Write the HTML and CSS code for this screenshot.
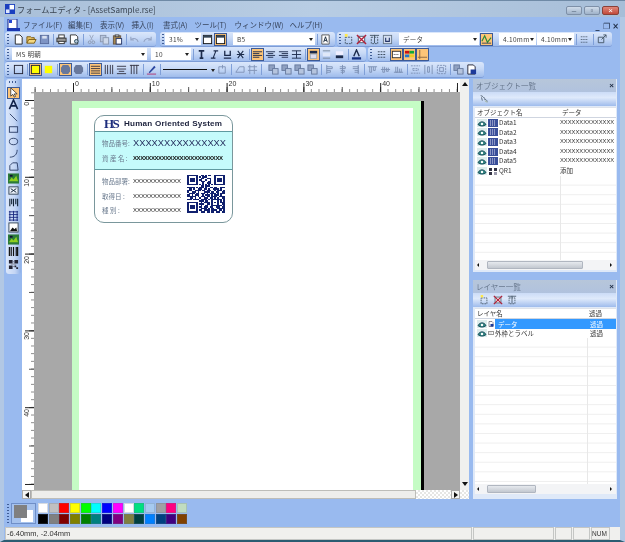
FILE: index.html
```html
<!DOCTYPE html>
<html lang="ja">
<head>
<meta charset="utf-8">
<title>フォームエディタ</title>
<link rel="stylesheet" href="styles.css">
</head>
<body>
<svg class="defs" width="0" height="0">
  <symbol id="new" viewBox="0 0 12 12"><path d="M2.500 1h5l2.500 2.500V11h-7.500z" fill="#fff" stroke="#222"/></symbol>
  <symbol id="open" viewBox="0 0 12 12"><path d="M1 10V3h4l1 1h3v2" fill="#e8c060" stroke="#7a5a10"/><path d="M1 10l2-4h8l-2 4z" fill="#f5d880" stroke="#7a5a10"/></symbol>
  <symbol id="save" viewBox="0 0 12 12"><rect x="1.500" y="1.500" width="9" height="9" fill="#7d93c4" stroke="#55699a"/><rect x="3.500" y="2" width="5" height="3" fill="#d8e0f0"/></symbol>
  <symbol id="print" viewBox="0 0 12 12"><rect x="3" y="1" width="6" height="3.500" fill="#fff" stroke="#333"/><rect x="1" y="4.500" width="10" height="4" fill="#999" stroke="#333"/><rect x="3" y="8" width="6" height="2.500" fill="#fff" stroke="#333"/></symbol>
  <symbol id="prev" viewBox="0 0 12 12"><path d="M1.500 1h6l2 2v8h-8z" fill="#fff" stroke="#333"/><circle cx="8" cy="8" r="2" fill="#bcd" stroke="#245"/></symbol>
  <symbol id="cut" viewBox="0 0 12 12"><path d="M4 1l3 6M8 1L5 7" stroke="#9aa7bf" fill="none"/><circle cx="4" cy="9" r="1.500" fill="none" stroke="#8a97af"/><circle cx="8" cy="9" r="1.500" fill="none" stroke="#8a97af"/></symbol>
  <symbol id="copy" viewBox="0 0 12 12"><rect x="1.500" y="1.500" width="6" height="7" fill="#b8c6de" stroke="#8a97af"/><rect x="4.500" y="4" width="6" height="7" fill="#cdd8ea" stroke="#8a97af"/></symbol>
  <symbol id="paste" viewBox="0 0 12 12"><rect x="1.500" y="2" width="8" height="9" fill="#a88850" stroke="#654"/><rect x="4.500" y="5" width="6" height="6" fill="#fff" stroke="#236"/><rect x="3.500" y="1" width="4" height="2" fill="#ddd" stroke="#444"/></symbol>
  <symbol id="undo" viewBox="0 0 12 12"><path d="M10 8.500C9 5 5 4 2.500 6M2 3v3.500h3.500" fill="none" stroke="#95a5c5" stroke-width="1.200"/></symbol>
  <symbol id="redo" viewBox="0 0 12 12"><path d="M2 8.500C3 5 7 4 9.500 6M10 3v3.500H6.500" fill="none" stroke="#95a5c5" stroke-width="1.200"/></symbol>
  <symbol id="page" viewBox="0 0 12 12"><rect x="1.500" y="1.500" width="9" height="9" fill="#fff" stroke="#111"/><rect x="1.500" y="1.500" width="9" height="2.500" fill="#345"/></symbol>
  <symbol id="docA" viewBox="0 0 12 12"><path d="M2 1h8v10H2z" fill="#fff" stroke="#555"/><path d="M4 9l2-6 2 6M4.800 7h2.400" fill="none" stroke="#123"/></symbol>
  <symbol id="lnew" viewBox="0 0 12 12"><rect x="2.500" y="3.500" width="7" height="7" fill="none" stroke="#456" stroke-dasharray="2 1"/><path d="M2 0h3v3H2z" fill="#ffe94a"/></symbol>
  <symbol id="ldel" viewBox="0 0 12 12"><rect x="2.500" y="2.500" width="7" height="7" fill="#fff" stroke="#456"/><path d="M1 1l10 10M11 1L1 11" stroke="#b3213a" stroke-width="1.500"/></symbol>
  <symbol id="lprop" viewBox="0 0 12 12"><rect x="2.500" y="3.500" width="7" height="7" fill="none" stroke="#456" stroke-dasharray="2 1"/><path d="M1 1.500h10M6 1v9" stroke="#456"/></symbol>
  <symbol id="lu" viewBox="0 0 12 12"><rect x="1.500" y="1.500" width="9" height="9" fill="#d4def0" stroke="#678"/><path d="M4 4v4h4V4" fill="none" stroke="#236" stroke-width="1.200"/></symbol>
  <symbol id="wave" viewBox="0 0 12 12"><path d="M1 8L4 2l3 7 4-5" fill="none" stroke="#2a8a3a" stroke-width="1.300"/><path d="M1 10h10" stroke="#345"/></symbol>
  <symbol id="grid" viewBox="0 0 12 12"><path d="M2 3h8M2 6h8M2 9h8" stroke="#345" stroke-dasharray="1 1"/></symbol>
  <symbol id="arrowbox" viewBox="0 0 12 12"><path d="M2.500 3.500h6v6h-6z" fill="none" stroke="#456"/><path d="M6 6l5-5M8 1h3v3" stroke="#456" fill="none"/></symbol>
  <symbol id="bold" viewBox="0 0 12 12"><path d="M3 2h6M4 10h4M6 2v8" stroke="#1b2a4a" stroke-width="1.800" fill="none"/></symbol>
  <symbol id="ital" viewBox="0 0 12 12"><path d="M5 2h5M2 10h5M7.500 2l-3 8" stroke="#1b2a4a" stroke-width="1.200" fill="none"/></symbol>
  <symbol id="und" viewBox="0 0 12 12"><path d="M3 2v5h6V2M2 10h8" stroke="#1b2a4a" stroke-width="1.400" fill="none"/></symbol>
  <symbol id="strike" viewBox="0 0 12 12"><path d="M3 2l6 8M9 2l-6 8M2 6h8" stroke="#1b2a4a" stroke-width="1.100" fill="none"/></symbol>
  <symbol id="al" viewBox="0 0 12 12"><path d="M1 3h10M1 5h7M1 7h10M1 9h7" stroke="#1b2a4a"/></symbol>
  <symbol id="ac" viewBox="0 0 12 12"><path d="M1 3h10M3 5h6M1 7h10M3 9h6" stroke="#1b2a4a"/></symbol>
  <symbol id="ar" viewBox="0 0 12 12"><path d="M1 3h10M4 5h7M1 7h10M4 9h7" stroke="#1b2a4a"/></symbol>
  <symbol id="aj" viewBox="0 0 12 12"><path d="M1 2h10M1 6h10M1 10h10M6 2v8" stroke="#1b2a4a"/></symbol>
  <symbol id="vt" viewBox="0 0 12 12"><rect x="2" y="2" width="8" height="3" fill="#1b2a4a"/><rect x="2.500" y="5.500" width="7" height="5" fill="#dde" stroke="#9ab"/></symbol>
  <symbol id="vm" viewBox="0 0 12 12"><path d="M2 2h8M2 10h8" stroke="#789"/><rect x="2" y="4" width="8" height="4" fill="#dfe8f8"/></symbol>
  <symbol id="vb" viewBox="0 0 12 12"><rect x="2" y="2.500" width="8" height="4" fill="#eef"/><rect x="2" y="7" width="8" height="3" fill="#1b2a4a"/></symbol>
  <symbol id="colA" viewBox="0 0 12 12"><path d="M3 8l3-7 3 7" fill="none" stroke="#1b2a4a" stroke-width="1.500"/><rect x="1" y="9" width="10" height="2.500" fill="#14307e"/></symbol>
  <symbol id="gr1" viewBox="0 0 12 12"><path d="M2 3h2M5 3h2M8 3h2M2 6h2M5 6h2M8 6h2M2 9h2M5 9h2M8 9h2" stroke="#345"/></symbol>
  <symbol id="or1" viewBox="0 0 12 12"><rect x="1.500" y="2.500" width="9" height="7" fill="#fff" stroke="#333"/><path d="M3 6h6" stroke="#333" stroke-dasharray="1 1"/></symbol>
  <symbol id="or2" viewBox="0 0 12 12"><rect x="1" y="2" width="5" height="3" fill="#c11"/><rect x="6" y="2" width="5" height="3" fill="#1a3"/><rect x="1" y="6" width="5" height="3" fill="#27c"/><rect x="6" y="6" width="5" height="3" fill="#ec2"/></symbol>
  <symbol id="or3" viewBox="0 0 12 12"><path d="M3 1v10M1 9h10" stroke="#864" fill="none"/></symbol>
  <symbol id="sq" viewBox="0 0 12 12"><rect x="1.500" y="1.500" width="9" height="9" fill="none" stroke="#223"/></symbol>
  <symbol id="sqy" viewBox="0 0 12 12"><rect x="1.500" y="1.500" width="9" height="9" fill="#ff0" stroke="#223"/></symbol>
  <symbol id="fy" viewBox="0 0 12 12"><rect x="2" y="2" width="8" height="8" fill="#ff0"/></symbol>
  <symbol id="shp" viewBox="0 0 12 12"><path d="M3 1h6l2 3v4l-2 3H3L1 8V4z" fill="#68789c"/></symbol>
  <symbol id="l1" viewBox="0 0 12 12"><path d="M1 2.500h10M1 5h10M1 7.500h10M1 10h10" stroke="#334"/></symbol>
  <symbol id="l2" viewBox="0 0 12 12"><path d="M2.500 1v10M5 1v10M8 1v10M10.500 1v10" stroke="#334"/></symbol>
  <symbol id="l3" viewBox="0 0 12 12"><path d="M1 2.500h10M1 5.500h10M3 8h6M1 10.500h10" stroke="#334"/></symbol>
  <symbol id="l4" viewBox="0 0 12 12"><path d="M2.500 1v10M5.500 1v10M8.500 1v10M1 1.500h10" stroke="#334"/></symbol>
  <symbol id="pen" viewBox="0 0 12 12"><path d="M3 9l6-7 1.500 1.500L4 10z" fill="#2a46a0"/><path d="M1 11h10" stroke="#b03070"/></symbol>
  <symbol id="m1" viewBox="0 0 12 12"><path d="M2 3h7M2 3v7h7V3M6 1v4" stroke="#8194b8" fill="none"/></symbol>
  <symbol id="m2" viewBox="0 0 12 12"><path d="M2 9l4-6h5v6z" stroke="#8194b8" fill="none"/></symbol>
  <symbol id="m3" viewBox="0 0 12 12"><path d="M1 3h10M1 7h10M3 1v10M8 1v10" stroke="#8194b8"/></symbol>
  <symbol id="d1" viewBox="0 0 12 12"><rect x="1" y="1" width="6" height="6" fill="#8fa0c0" stroke="#66799e"/><rect x="5" y="5" width="6" height="6" fill="#b5c4de" stroke="#66799e"/></symbol>
  <symbol id="d2" viewBox="0 0 12 12"><path d="M3 1v10M3 3h6v2H3M3 7h4v2H3" stroke="#7d90b5" fill="none"/></symbol>
  <symbol id="d3" viewBox="0 0 12 12"><path d="M6 1v10M3 3h6v2H3M4 7h4v2H4" stroke="#7d90b5" fill="none"/></symbol>
  <symbol id="d4" viewBox="0 0 12 12"><path d="M9 1v10M3 3h6v2H3M5 7h4v2H5" stroke="#7d90b5" fill="none"/></symbol>
  <symbol id="d5" viewBox="0 0 12 12"><path d="M1 3h10M3 3v6h2V3M7 3v4h2V3" stroke="#7d90b5" fill="none"/></symbol>
  <symbol id="d6" viewBox="0 0 12 12"><path d="M1 6h10M3 3v6h2V3M7 4v4h2V4" stroke="#7d90b5" fill="none"/></symbol>
  <symbol id="d7" viewBox="0 0 12 12"><path d="M1 9h10M3 3v6h2V3M7 5v4h2V5" stroke="#7d90b5" fill="none"/></symbol>
  <symbol id="d8" viewBox="0 0 12 12"><path d="M1 2h10M1 10h10M3 5h6v2H3z" stroke="#7d90b5" fill="none" stroke-dasharray="2 1"/></symbol>
  <symbol id="d9" viewBox="0 0 12 12"><path d="M2 1v10M10 1v10M5 3h2v6H5z" stroke="#7d90b5" fill="none"/></symbol>
  <symbol id="d10" viewBox="0 0 12 12"><rect x="1.500" y="1.500" width="9" height="9" fill="none" stroke="#7d90b5" stroke-dasharray="2 1"/><rect x="4" y="4" width="4" height="4" fill="none" stroke="#7d90b5"/></symbol>
  <symbol id="docb" viewBox="0 0 12 12"><path d="M2 1h6l2 2v8H2z" fill="#fff" stroke="#223"/><rect x="5" y="6" width="6" height="5" fill="#1d3a9a"/></symbol>
  <symbol id="ptr" viewBox="0 0 12 12"><path d="M3 1v9l2.300-2 1.500 3 1.400-.700L6.800 7.500H10z" fill="#fff" stroke="#222" stroke-width=".800"/></symbol>
  <symbol id="tA" viewBox="0 0 12 12"><path d="M1.500 11L6 1l4.500 10M3.500 7.500h5" fill="none" stroke="#11224a" stroke-width="1.700"/></symbol>
  <symbol id="tl" viewBox="0 0 12 12"><path d="M2 2l8 8" stroke="#2b3d66"/></symbol>
  <symbol id="tr" viewBox="0 0 12 12"><rect x="1.500" y="3" width="9" height="6" fill="none" stroke="#2b3d66"/></symbol>
  <symbol id="te" viewBox="0 0 12 12"><ellipse cx="6" cy="6" rx="4.500" ry="3.500" fill="none" stroke="#2b3d66"/></symbol>
  <symbol id="ta" viewBox="0 0 12 12"><path d="M2 10c5 0 8-3 8-8" fill="none" stroke="#2b3d66"/></symbol>
  <symbol id="tp" viewBox="0 0 12 12"><path d="M2 10V5l3-3h5l1 8z" fill="none" stroke="#2b3d66"/></symbol>
  <symbol id="timg" viewBox="0 0 12 12"><rect width="12" height="11" y=".5" fill="#2b7a3a"/><path d="M1 9l3-4 2 2 3-4 2 6z" fill="#8fd020"/><rect x="2" y="2" width="3" height="2" fill="#113"/></symbol>
  <symbol id="ttx" viewBox="0 0 12 12"><rect x="1" y="2" width="10" height="8" fill="#e8eef8" stroke="#345"/><path d="M3 4l6 4M9 4L3 8" stroke="#123"/></symbol>
  <symbol id="tbar" viewBox="0 0 12 12"><path d="M2 2v8M4 2v6M6 2v8M8.500 2v6M10.500 2v8" stroke="#123" stroke-width="1.200"/></symbol>
  <symbol id="ttb" viewBox="0 0 12 12"><path d="M1 2h10M1 5h10M1 8h10M1 11h10M2 1v11M6 1v11M10 1v11" stroke="#1a2a80"/></symbol>
  <symbol id="tpic" viewBox="0 0 12 12"><rect x="1" y="1" width="10" height="10" fill="#fff" stroke="#345"/><path d="M2 10l3-4 2 2 2-2 1 4z" fill="#111"/></symbol>
  <symbol id="tbc" viewBox="0 0 12 12"><path d="M1.500 1v10M3.500 1v10M6 1v10M9 1v10M10.500 1v10" stroke="#111" stroke-width="1.300"/></symbol>
  <symbol id="tqr" viewBox="0 0 12 12"><path d="M1 1h4v4H1zM7 1h4v4H7zM1 7h4v4H1zM7 7h2v2H7zM9 9h2v2H9z" fill="#223"/><path d="M5.500 3h1M3 5.500h6M5.500 8h1" stroke="#778"/></symbol>
  <symbol id="eye" viewBox="0 0 10 8"><rect width="10" height="8" fill="#dcecec"/><path d="M1 5.500C3 2 7 2 9 5.500 7 7.500 3 7.500 1 5.500z" fill="#2f8a82" stroke="#145"/><circle cx="5" cy="5" r="1.200" fill="#fff"/></symbol>
  <symbol id="tbox" viewBox="0 0 10 8"><rect width="10" height="8" fill="#3a4f9a"/><path d="M2 2h6M2 4h6M2 6h6" stroke="#dde" stroke-dasharray="1 1"/></symbol>
  <symbol id="qbox" viewBox="0 0 10 8"><path d="M1 1h3v3H1zM6 1h3v3H6zM1 5h3v3H1z" fill="#334"/><path d="M6 5h3v3H6z" fill="#99a"/></symbol>
  <symbol id="pc" viewBox="0 0 12 12"><path d="M2 2c3 0 3 3 5 3M6 6c2 0 3 1 4 3M3 4l1 4" stroke="#456" fill="none"/><path d="M7 8l3 2" stroke="#9a8" /></symbol>
</svg>

<div class="window">
  <header class="title">
    <svg class="title-ico" viewBox="0 0 11 11"><rect width="11" height="11" fill="#1b3fbf"/><rect x="5" y="1" width="5" height="5" fill="#fff"/><rect x="1" y="6" width="4" height="4" fill="#dfe8ff"/></svg>
    <span class="title-text">フォームエディタ - [AssetSample.rse]</span>
    <div class="win-btns">
      <span class="wb">–</span><span class="wb">▫</span><span class="wb close">×</span>
    </div>
  </header>

  <nav class="menu">
    <svg class="menu-ico" viewBox="0 0 13 12"><rect x="1" y="0" width="9" height="10" fill="#fff" stroke="#12238a"/><rect x="0" y="9" width="13" height="3" fill="#1a36b0"/><rect x="2" y="1" width="3" height="3" fill="#2647d0"/></svg>
    <span class="mi m1">ファイル(F)</span>
    <span class="mi m2">編集(E)</span>
    <span class="mi m3">表示(V)</span>
    <span class="mi m3">挿入(I)</span>
    <span class="mi m3">書式(A)</span>
    <span class="mi m4">ツール(T)</span>
    <span class="mi m5">ウィンドウ(W)</span>
    <span class="mi">ヘルプ(H)</span>
    <div class="mdi"><span>_</span><span>❐</span><span>×</span></div>
  </nav>

  <div class="tbrow r1">
    <div class="band b1">
      <i class="g"></i>
      <span class="b"><svg><use href="#new"/></svg></span>
      <span class="b"><svg><use href="#open"/></svg></span>
      <span class="b"><svg><use href="#save"/></svg></span><i class="s"></i>
      <span class="b"><svg><use href="#print"/></svg></span>
      <span class="b"><svg><use href="#prev"/></svg></span><i class="s"></i>
      <span class="b"><svg><use href="#cut"/></svg></span>
      <span class="b"><svg><use href="#copy"/></svg></span>
      <span class="b"><svg><use href="#paste"/></svg></span><i class="s"></i>
      <span class="b"><svg><use href="#undo"/></svg></span>
      <span class="b"><svg><use href="#redo"/></svg></span>
    </div>
    <div class="band b2">
      <i class="g gt"></i>
      <span class="combo w36">31%</span>
      <span class="b"><svg><use href="#page"/></svg></span>
      <span class="b on"><svg><use href="#page"/></svg></span>
      <span class="combo w82 ml6">B5</span><i class="s"></i>
      <span class="b"><svg><use href="#docA"/></svg></span>
    </div>
    <div class="band b3">
      <i class="g gt"></i>
      <span class="b"><svg><use href="#lnew"/></svg></span>
      <span class="b"><svg><use href="#ldel"/></svg></span>
      <span class="b"><svg><use href="#lprop"/></svg></span>
      <span class="b"><svg><use href="#lu"/></svg></span>
      <span class="combo w80 ml5">データ</span>
      <span class="b on ml1"><svg><use href="#wave"/></svg></span>
      <span class="combo w37 ml6">4.10mm</span>
      <span class="combo w37 ml1">4.10mm</span><i class="s"></i>
      <span class="b"><svg><use href="#grid"/></svg></span><i class="s"></i>
      <span class="b"><svg><use href="#arrowbox"/></svg></span>
    </div>
  </div>

  <div class="tbrow r2">
    <div class="band b4">
      <i class="g"></i>
      <span class="combo w135">MS 明朝</span>
      <span class="combo w40 ml4">10</span><i class="s"></i>
      <span class="b"><svg><use href="#bold"/></svg></span>
      <span class="b"><svg><use href="#ital"/></svg></span>
      <span class="b"><svg><use href="#und"/></svg></span>
      <span class="b"><svg><use href="#strike"/></svg></span><i class="s"></i>
      <span class="b on"><svg><use href="#al"/></svg></span>
      <span class="b"><svg><use href="#ac"/></svg></span>
      <span class="b"><svg><use href="#ar"/></svg></span>
      <span class="b"><svg><use href="#aj"/></svg></span><i class="s"></i>
      <span class="b on"><svg><use href="#vt"/></svg></span>
      <span class="b"><svg><use href="#vm"/></svg></span>
      <span class="b"><svg><use href="#vb"/></svg></span><i class="s"></i>
      <span class="b"><svg><use href="#colA"/></svg></span>
    </div>
    <div class="band b5">
      <i class="g"></i>
      <span class="b"><svg><use href="#gr1"/></svg></span>
      <span class="b on ml2"><svg><use href="#or1"/></svg></span>
      <span class="b on"><svg><use href="#or2"/></svg></span>
      <span class="b on"><svg><use href="#or3"/></svg></span>
    </div>
  </div>

  <div class="tbrow r3">
    <div class="band b6">
      <i class="g"></i>
      <span class="b"><svg><use href="#sq"/></svg></span><i class="s"></i>
      <span class="b on"><svg><use href="#sqy"/></svg></span>
      <span class="b"><svg><use href="#fy"/></svg></span><i class="s"></i>
      <span class="b on"><svg><use href="#shp"/></svg></span>
      <span class="b"><svg><use href="#shp"/></svg></span><i class="s"></i>
      <span class="b on"><svg><use href="#l1"/></svg></span>
      <span class="b"><svg><use href="#l2"/></svg></span>
      <span class="b"><svg><use href="#l3"/></svg></span>
      <span class="b"><svg><use href="#l4"/></svg></span><i class="s"></i>
      <span class="b"><svg><use href="#pen"/></svg></span><i class="s"></i>
      <span class="combo w54 linecombo"><i class="line"></i></span>
      <span class="b"><svg><use href="#m1"/></svg></span><i class="s"></i>
      <span class="b"><svg><use href="#m2"/></svg></span>
      <span class="b"><svg><use href="#m3"/></svg></span><i class="s"></i>
      <span class="b ml4"><svg><use href="#d1"/></svg></span>
      <span class="b"><svg><use href="#d1"/></svg></span>
      <span class="b"><svg><use href="#d1"/></svg></span>
      <span class="b"><svg><use href="#d1"/></svg></span><i class="s"></i>
      <span class="b"><svg><use href="#d2"/></svg></span>
      <span class="b"><svg><use href="#d3"/></svg></span>
      <span class="b"><svg><use href="#d4"/></svg></span><i class="s"></i>
      <span class="b"><svg><use href="#d5"/></svg></span>
      <span class="b"><svg><use href="#d6"/></svg></span>
      <span class="b"><svg><use href="#d7"/></svg></span><i class="s"></i>
      <span class="b"><svg><use href="#d8"/></svg></span>
      <span class="b"><svg><use href="#d9"/></svg></span>
      <span class="b"><svg><use href="#d10"/></svg></span><i class="s"></i>
      <span class="b"><svg><use href="#d1"/></svg></span>
      <span class="b"><svg><use href="#docb"/></svg></span>
    </div>
  </div>

  <main class="workspace">
    <aside class="rail">
      <i class="rail-grip"></i>
      <span class="tool on"><svg><use href="#ptr"/></svg></span>
      <span class="tool"><svg><use href="#tA"/></svg></span>
      <span class="tool"><svg><use href="#tl"/></svg></span>
      <span class="tool"><svg><use href="#tr"/></svg></span>
      <span class="tool"><svg><use href="#te"/></svg></span>
      <span class="tool"><svg><use href="#ta"/></svg></span>
      <span class="tool"><svg><use href="#tp"/></svg></span>
      <span class="tool"><svg><use href="#timg"/></svg></span>
      <span class="tool"><svg><use href="#ttx"/></svg></span>
      <span class="tool"><svg><use href="#tbar"/></svg></span>
      <span class="tool"><svg><use href="#ttb"/></svg></span>
      <span class="tool"><svg><use href="#tpic"/></svg></span>
      <span class="tool"><svg><use href="#timg"/></svg></span>
      <span class="tool"><svg><use href="#tbc"/></svg></span>
      <span class="tool"><svg><use href="#tqr"/></svg></span>
    </aside>

    <section class="canvas">
      <div class="corner"></div>
      <div class="ruler-h">
        <span>0</span><span>10</span><span>20</span><span>30</span><span>40</span>
      </div>
      <div class="sb-up"><i class="tri up"></i></div>
      <div class="ruler-v">
        <span>0</span><span>10</span><span>20</span><span>30</span><span>40</span>
      </div>
      <div class="stage">
        <div class="paper">
          <div class="sheet">
            <article class="card">
              <div class="card-head">
                <span class="logo">HS</span>
                <span class="brand">Human Oriented System</span>
              </div>
              <div class="card-band">
                <div class="crow"><span class="lab">物品番号:</span><span class="xbig">XXXXXXXXXXXXXXX</span></div>
                <div class="crow"><span class="lab">資 産 名 :</span><span class="xdense">XXXXXXXXXXXXXXXXXXXXXXXXX</span></div>
              </div>
              <div class="card-low">
                <div class="low-text">
                  <div class="crow"><span class="lab">物品部署:</span><span class="xsm">XXXXXXXXXXXX</span></div>
                  <div class="crow"><span class="lab">取得日 :</span><span class="xsm">XXXXXXXXXXXX</span></div>
                  <div class="crow"><span class="lab">種 別 :</span><span class="xsm">XXXXXXXXXXXX</span></div>
                </div>
                <svg class="qr" viewBox="0 0 25 25" shape-rendering="crispEdges"><path fill="none" stroke="#10206e" d="M0 .5h7M9 .5h2M12 .5h1M14 .5h2M18 .5h7M0 1.500h1M6 1.500h1M8 1.500h1M10 1.500h3M18 1.500h1M24 1.500h1M0 2.500h1M2 2.500h3M6 2.500h1M9 2.500h2M13 2.500h3M18 2.500h1M20 2.500h3M24 2.500h1M0 3.500h1M2 3.500h3M6 3.500h1M8 3.500h2M12 3.500h1M15 3.500h1M18 3.500h1M20 3.500h3M24 3.500h1M0 4.500h1M2 4.500h3M6 4.500h1M9 4.500h3M14 4.500h2M18 4.500h1M20 4.500h3M24 4.500h1M0 5.500h1M6 5.500h1M10 5.500h1M13 5.500h3M18 5.500h1M24 5.500h1M0 6.500h7M8 6.500h1M10 6.500h1M12 6.500h1M14 6.500h1M16 6.500h1M18 6.500h7M9 7.500h2M12 7.500h3M0 8.500h5M6 8.500h1M8 8.500h3M12 8.500h1M15 8.500h2M18 8.500h2M22 8.500h3M1 9.500h2M4 9.500h1M7 9.500h3M11 9.500h2M14 9.500h1M17 9.500h4M22 9.500h1M0 10.500h3M5 10.500h4M10 10.500h2M13 10.500h3M18 10.500h1M20 10.500h3M24 10.500h1M0 11.500h1M3 11.500h3M7 11.500h1M11 11.500h4M16 11.500h2M19 11.500h2M23 11.500h2M1 12.500h4M6 12.500h2M9 12.500h3M13 12.500h1M15 12.500h4M20 12.500h1M22 12.500h3M0 13.500h2M3 13.500h1M5 13.500h3M10 13.500h1M12 13.500h3M16 13.500h1M18 13.500h3M22 13.500h1M0 14.500h6M7 14.500h1M9 14.500h3M13 14.500h2M16 14.500h4M21 14.500h4M2 15.500h2M5 15.500h1M8 15.500h1M11 15.500h3M15 15.500h2M18 15.500h1M20 15.500h1M23 15.500h2M0 16.500h3M4 16.500h4M9 16.500h4M14 16.500h1M16 16.500h7M24 16.500h1M8 17.500h3M12 17.500h2M16 17.500h1M20 17.500h1M22 17.500h1M24 17.500h1M0 18.500h7M9 18.500h1M11 18.500h4M16 18.500h1M18 18.500h1M20 18.500h1M22 18.500h3M0 19.500h1M6 19.500h1M8 19.500h3M13 19.500h2M16 19.500h1M20 19.500h1M23 19.500h2M0 20.500h1M2 20.500h3M6 20.500h1M9 20.500h1M12 20.500h2M16 20.500h7M24 20.500h1M0 21.500h1M2 21.500h3M6 21.500h1M8 21.500h2M11 21.500h3M15 21.500h2M19 21.500h3M23 21.500h2M0 22.500h1M2 22.500h3M6 22.500h1M9 22.500h4M14 22.500h1M16 22.500h2M20 22.500h5M0 23.500h1M6 23.500h1M8 23.500h2M11 23.500h4M16 23.500h4M21 23.500h2M24 23.500h1M0 24.500h7M9 24.500h3M13 24.500h2M16 24.500h2M19 24.500h3M23 24.500h2"/></svg>
              </div>
            </article>
          </div>
        </div>
      </div>
      <div class="sb-v"><i class="tri down"></i></div>
      <div class="sb-h">
        <span class="sbox"><i class="tri left"></i></span>
        <i class="sb-track"></i>
        <span class="sbox sbox-r"><i class="tri right"></i></span>
      </div>
    </section>

    <div class="panels">
      <section class="panel p-obj">
        <div class="p-title"><span>オブジェクト一覧</span><b>×</b></div>
        <div class="p-tools"><svg class="pi"><use href="#pc"/></svg></div>
        <div class="list">
          <div class="lrow lhead c-obj"><span>オブジェクト名</span><span>データ</span></div>
          <div class="lrow c-obj"><span class="nm"><svg class="ei"><use href="#eye"/></svg><svg class="ei"><use href="#tbox"/></svg>Data1</span><span class="dv">XXXXXXXXXXXXXX</span></div>
          <div class="lrow c-obj"><span class="nm"><svg class="ei"><use href="#eye"/></svg><svg class="ei"><use href="#tbox"/></svg>Data2</span><span class="dv">XXXXXXXXXXXXXX</span></div>
          <div class="lrow c-obj"><span class="nm"><svg class="ei"><use href="#eye"/></svg><svg class="ei"><use href="#tbox"/></svg>Data3</span><span class="dv">XXXXXXXXXXXXXX</span></div>
          <div class="lrow c-obj"><span class="nm"><svg class="ei"><use href="#eye"/></svg><svg class="ei"><use href="#tbox"/></svg>Data4</span><span class="dv">XXXXXXXXXXXXXX</span></div>
          <div class="lrow c-obj"><span class="nm"><svg class="ei"><use href="#eye"/></svg><svg class="ei"><use href="#tbox"/></svg>Data5</span><span class="dv">XXXXXXXXXXXXXX</span></div>
          <div class="lrow c-obj"><span class="nm"><svg class="ei"><use href="#eye"/></svg><svg class="ei"><use href="#qbox"/></svg>QR1</span><span>添加</span></div>
          <div class="lfill c-line"></div>
          <div class="hscroll"><i class="tri left sm"></i><i class="thumb t96"></i><i class="tri right sm"></i></div>
        </div>
      </section>
      <section class="panel p-lay">
        <div class="p-title"><span>レイヤー一覧</span><b>×</b></div>
        <div class="p-tools"><svg class="pi"><use href="#lnew"/></svg><svg class="pi"><use href="#ldel"/></svg><svg class="pi"><use href="#lprop"/></svg></div>
        <div class="list">
          <div class="lrow lhead c-lay"><span>レイヤ名</span><span>透過</span></div>
          <div class="lrow c-lay"><span class="nm"><svg class="ei"><use href="#eye"/></svg><svg class="ei n"><use href="#docb"/></svg><em class="sel">データ</em></span><span class="sel sel2">透過</span></div>
          <div class="lrow c-lay"><span class="nm"><svg class="ei"><use href="#eye"/></svg><svg class="ei n"><use href="#or1"/></svg>外枠とラベル</span><span class="pl3">透過</span></div>
          <div class="lfill c-line2"></div>
          <div class="hscroll"><i class="tri left sm"></i><i class="thumb t49"></i><i class="tri right sm"></i></div>
        </div>
      </section>
    </div>
  </main>

  <div class="palette">
    <i class="g g-pal"></i>
    <div class="swatch"><i class="bg"></i><i class="fg"></i></div>
    <div class="colors">
      <i class="c-fff"></i><i class="c-c0"></i><i class="c-red"></i><i class="c-yel"></i><i class="c-lim"></i><i class="c-cya"></i><i class="c-blu"></i><i class="c-mag"></i><i class="c-fff"></i><i class="c-min"></i><i class="c-lbl"></i><i class="c-a0"></i><i class="c-pnk"></i><i class="c-lgr"></i>
      <i class="c-blk"></i><i class="c-80"></i><i class="c-mar"></i><i class="c-oli"></i><i class="c-grn"></i><i class="c-tea"></i><i class="c-nav"></i><i class="c-pur"></i><i class="c-ol2"></i><i class="c-dte"></i><i class="c-azu"></i><i class="c-dbl"></i><i class="c-ind"></i><i class="c-bro"></i>
    </div>
  </div>

  <footer class="status">
    <span class="pane p1">-6.40mm, -2.04mm</span>
    <span class="pane p2"></span>
    <span class="pane p3"></span>
    <span class="pane p3"></span>
    <span class="pane p4">NUM</span>
    <span class="sgrip"></span>
  </footer>
</div>
</body>
</html>
```
FILE: styles.css
```css
html, body { margin: 0; padding: 0; background: #99baef; overflow: hidden; }
body { font-family: "Noto Sans CJK JP", "Liberation Sans", sans-serif; font-size: 8px; color: #3a4352; }
.defs { position: absolute; }
i, em { font-style: normal; }

.window { width: 625px; height: 542px; box-sizing: border-box; display: flex; flex-direction: column; background: #99baef; border-bottom: 2px solid #2b5c72; border-left: 4px solid #b2c8e4; border-right: 5px solid #b2c8e4; filter: blur(.3px); }

/* title */
.title { height: 17px; flex: none; margin: 0 -5px 0 -4px; display: flex; align-items: center; padding: 0 6px 0 5px; background: linear-gradient(90deg, #a9bfd8, #b8cde4 50%, #a7bed8); border-top: 1px solid #6f8aa6; box-sizing: border-box; }
.title-ico { width: 10px; height: 10px; margin-right: 2px; }
.title-text { font-size: 8.150px; color: #3b4654; white-space: nowrap; }
.win-btns { margin-left: auto; display: flex; gap: 2px; margin-top: 3px; }
.wb { width: 16px; height: 9px; box-sizing: border-box; border: 1px solid #7e90a8; border-radius: 2px; background: linear-gradient(#d0dcea, #9fb2c9); font: 8px/7px "Liberation Sans", sans-serif; text-align: center; color: #4a5a70; overflow: hidden; }
.wb.close { width: 17px; background: linear-gradient(#e0877a, #c24a3c); border-color: #8a4038; color: #fff; }

/* menu */
.menu { height: 15px; flex: none; display: flex; align-items: center; font-size: 7.500px; color: #37445c; padding-left: 3px; white-space: nowrap; }
.menu-ico { width: 13px; height: 12px; margin-right: 3px; }
.m1 { width: 45px; }
.m2 { width: 32px; }
.m3 { width: 31.500px; }
.m4 { width: 40px; }
.m5 { width: 55px; }
.mdi { margin-left: auto; display: flex; gap: 2px; font: bold 8px/10px "DejaVu Sans", sans-serif; color: #1d2b44; width: 26px; margin-top: 4px; }
.mdi span { width: 7px; text-align: center; overflow: hidden; }

/* toolbars */
.tbrow { display: flex; flex: none; height: 15px; gap: 1px; padding-left: 1px; }
.r3 { height: 16px; }
.band { height: 100%; box-sizing: border-box; display: flex; align-items: center; padding-left: 1px; background: linear-gradient(#dbe7fb, #c7d9f6 45%, #9fbcec); border-radius: 3px; border-bottom: 1px solid #7d9cd6; }
.b1 { width: 151px; }
.b2 { width: 175px; margin-left: 3px; }
.b3 { width: 275px; margin-left: 1px; }
.b4 { width: 361px; }
.b5 { width: 61px; margin-left: 1px; }
.b6 { width: 479px; }
.g { flex: none; width: 2px; height: 10px; margin: 0 3px 0 1px; background: repeating-linear-gradient(#3f5d96 0 1px, transparent 1px 3px); }
.gt { margin-right: 1px; }
.s { flex: none; width: 1px; height: 11px; margin: 0 1.500px; background: #7f9fd8; }
.b { flex: none; width: 13px; height: 13px; box-sizing: border-box; display: flex; align-items: center; justify-content: center; }
.b svg { width: 11px; height: 11px; }
.b.on { background: #fdc578; outline: 1px solid #3c5a96; outline-offset: -1px; }
.combo { flex: none; height: 12px; box-sizing: border-box; background: #fff; font-size: 6.500px; line-height: 12px; padding-left: 4px; color: #444; position: relative; letter-spacing: .3px; }
.combo::after { content: ""; position: absolute; right: 2px; top: 5px; border: 2.500px solid transparent; border-top: 3px solid #222; border-bottom: 0; }
.w36 { width: 36px; }
.w37 { width: 37px; }
.w40 { width: 40px; }
.w54 { width: 54px; }
.w80 { width: 80px; }
.w82 { width: 82px; }
.w135 { width: 135px; }
.ml1 { margin-left: 1px; }
.ml2 { margin-left: 2px; }
.ml4 { margin-left: 4px; }
.ml5 { margin-left: 5px; }
.ml6 { margin-left: 6px; }
.linecombo { background: none; display: flex; align-items: center; padding: 0 9px 0 1px; }
.linecombo .line { display: block; width: 100%; height: 1px; background: #111; }
.linecombo::after { right: 1px; }

/* workspace */
.workspace { flex: 1; min-height: 0; display: flex; padding-top: 1px; }
.rail { flex: none; width: 15px; height: 195px; margin-left: 2px; margin-right: 1px; box-sizing: border-box; display: flex; flex-direction: column; align-items: center; padding-top: 7.500px; background: linear-gradient(90deg, #dbe7fb, #c3d5f4 60%, #8fb0e6); border-radius: 3px; position: relative; }
.rail-grip { position: absolute; top: 2px; left: 3px; width: 9px; height: 2px; background: repeating-linear-gradient(90deg, #3f5d96 0 1px, transparent 1px 3px); }
.tool { flex: none; width: 13px; height: 12.250px; display: flex; align-items: center; justify-content: center; }
.tool svg { width: 11px; height: 11px; }
.tool.on { background: #fdc578; outline: 1px solid #3c5a96; outline-offset: -1px; }

.canvas { flex: none; width: 447px; height: 420px; display: grid; grid-template-columns: 12px 426px 9px; grid-template-rows: 13px 398px 9px; background: #f0f0ee; }
.corner { background: #fff; }
.ruler-h { background-color: #fff; display: flex; padding-left: 39px; overflow: hidden; font: 7px/9px "Liberation Sans", sans-serif; color: #333;
  background-image: linear-gradient(90deg, #222 1px, transparent 1px), linear-gradient(90deg, #555 1px, transparent 1px), linear-gradient(90deg, #888 1px, transparent 1px);
  background-size: 76.800px 9px, 38.400px 5px, 7.680px 3px; background-position: 39px 100%; background-repeat: repeat-x; }
.ruler-h span { flex: none; width: 76.800px; padding-left: 2px; box-sizing: border-box; }
.ruler-v { background-color: #fff; display: flex; flex-direction: column; padding-top: 8px; box-sizing: border-box; overflow: hidden; min-height: 0; font: 7px/9px "Liberation Sans", sans-serif; color: #333;
  background-image: linear-gradient(#222 1px, transparent 1px), linear-gradient(#555 1px, transparent 1px), linear-gradient(#888 1px, transparent 1px);
  background-size: 9px 76.800px, 5px 38.400px, 3px 7.680px; background-position: 100% 8px; background-repeat: repeat-y; }
.ruler-v span { flex: none; height: 76.800px; padding-bottom: 2px; box-sizing: border-box; writing-mode: vertical-rl; transform: rotate(180deg); width: 9px; display: block; text-align: right; }
.stage { background: #a8a8a8; overflow: hidden; padding: 9px 0 0 38px; box-sizing: border-box; min-height: 0; }
.paper { width: 352px; height: 440px; box-sizing: border-box; background: #c5fcc5; padding: 7px 8px 0 7px; border-right: 3px solid #000; }
.sheet { background: #fff; height: 100%; padding: 7px 0 0 15px; box-sizing: border-box; }

.card { width: 139px; height: 108px; box-sizing: border-box; border: 1px solid #7a979c; border-radius: 10px; overflow: hidden; display: flex; flex-direction: column; }
.card-head { height: 15px; flex: none; display: flex; align-items: center; padding-left: 9px; }
.logo { font: bold 13px/14px "Liberation Serif", serif; color: #1c2c7c; letter-spacing: -1.500px; width: 20px; }
.brand { font: bold 8.100px "Liberation Sans", sans-serif; color: #1a1f3a; white-space: nowrap; letter-spacing: .2px; }
.card-band { height: 39px; flex: none; box-sizing: border-box; background: #c5fbfb; border-top: 1px solid #5f9aa0; border-bottom: 1px solid #5f9aa0; padding: 4px 0 0 7px; display: flex; flex-direction: column; gap: 1px; }
.crow { display: flex; align-items: center; white-space: nowrap; overflow: hidden; height: 14px; }
.lab { flex: none; width: 31px; font-size: 6.500px; color: #6a7a8e; }
.xbig { font: 9.300px "Liberation Sans", sans-serif; color: #25305f; }
.xdense { font: bold 6px "Liberation Sans", sans-serif; color: #111; letter-spacing: -.42px; }
.xsm { font: 6px "Liberation Sans", sans-serif; color: #222; }
.card-low { flex: 1; display: flex; padding: 4px 0 0 7px; }
.low-text { width: 85px; display: flex; flex-direction: column; }
.low-text .crow { height: 14.500px; }
.qr { width: 38px; height: 39px; flex: none; }

/* scrollbars */
.tri { display: block; width: 0; height: 0; border: 3px solid transparent; }
.tri.up { border-top: 0; border-bottom: 4px solid #111; }
.tri.down { border-bottom: 0; border-top: 4px solid #111; }
.tri.left { border-left: 0; border-right: 4px solid #111; }
.tri.right { border-right: 0; border-left: 4px solid #111; }
.tri.sm { border-width: 2px; }
.tri.sm.left { border-left: 0; border-right-width: 2px; }
.tri.sm.right { border-right: 0; border-left-width: 2px; }
.sb-up { grid-column: 3; grid-row: 1; background: #f0f0ee; display: flex; justify-content: center; padding-top: 3px; box-sizing: border-box; }
.sb-v { background: #f0f0ee; display: flex; align-items: flex-end; justify-content: center; padding-bottom: 4px; box-sizing: border-box; }
.sb-h { grid-column: 1 / 4; display: flex; align-items: stretch; padding-right: 9px; background: repeating-conic-gradient(#fff 0 25%, #e6e6e4 0 50%) 0 0 / 4px 4px; }
.sbox { flex: none; width: 9px; background: #f4f4f2; border: 1px solid #aaa; box-sizing: border-box; display: flex; align-items: center; justify-content: center; }
.sb-track { flex: none; width: 385px; margin-right: auto; background: #eeeeeb; border: 1px solid #bdbdb8; box-sizing: border-box; }

/* panels */
.panels { flex: none; width: 144px; margin-left: 4px; display: flex; flex-direction: column; gap: 8px; }
.panel { background: #dfe9f8; display: flex; flex-direction: column; padding: 0 1px 2px 0; box-sizing: border-box; }
.p-obj { height: 193px; }
.p-lay { height: 219px; padding-bottom: 5px; }
.p-title { flex: none; height: 13px; display: flex; align-items: center; justify-content: space-between; padding: 0 2px 0 3px; background: linear-gradient(#b7c6da, #b0c2de); font-size: 7.500px; color: #68788e; }
.p-title b { font: bold 8px "Liberation Sans", sans-serif; color: #1d2b44; }
.p-tools { flex: none; height: 14px; display: flex; align-items: center; gap: 4px; padding-left: 6px; background: linear-gradient(#cbdcf7, #dfeafb 40%, #9fbcec); }
.pi { width: 10px; height: 10px; }
.list { flex: 1; min-height: 0; margin: 1px 0 0 2px; background: #fff; display: flex; flex-direction: column; border-top: 1px solid #dfe3ea; }
.lrow { flex: none; height: 9.600px; display: grid; font-size: 6.500px; line-height: 9.600px; color: #333; overflow: hidden; white-space: nowrap; }
.lrow span { overflow: hidden; display: flex; align-items: center; }
.c-obj { grid-template-columns: 85px 56px; }
.c-lay { grid-template-columns: 112px 29px; }
.lhead { border-bottom: 1px solid #cfd5e0; height: 9px; }
.lhead span { padding-left: 2px; }
.nm { padding-left: 2px; gap: 1px; }
.dv { font: 5.800px/9.600px "Liberation Sans", sans-serif; }
.pl3 { padding-left: 3px; }
.ei { width: 10px; height: 8px; flex: none; }
.ei.n { width: 6px; height: 8px; }
.sel { background: #3399ff; color: #fff; height: 10px; line-height: 10px; flex: 1; padding-left: 3px; }
.lfill { flex: 1; min-height: 0; }
.c-line { background-image: linear-gradient(90deg, transparent 85px, #e8e8e8 85px 86px, transparent 86px), linear-gradient(transparent 9.100px, #eeeeee 9.100px); background-size: 100% 100%, 100% 9.600px; }
.c-line2 { background-image: linear-gradient(90deg, transparent 112px, #e8e8e8 112px 113px, transparent 113px), linear-gradient(transparent 9.100px, #eeeeee 9.100px); background-size: 100% 100%, 100% 9.600px; }
.hscroll { flex: none; height: 10px; display: flex; align-items: center; background: #f3f4f6; padding: 0 4px 0 2px; }
.thumb { display: block; height: 8px; background: linear-gradient(#e6e9ee, #c3c8d0); border: 1px solid #b0b6c0; border-radius: 1px; box-sizing: border-box; margin-left: 8px; margin-right: auto; }
.t96 { width: 96px; }
.t49 { width: 49px; }

/* palette */
.palette { flex: none; height: 27px; display: flex; align-items: center; padding-left: 3px; }
.g-pal { height: 20px; margin: 0 2px 0 0; }
.swatch { flex: none; width: 25px; height: 21px; box-sizing: border-box; border: 1px solid #6f8fc8; background: #a5c2ee; position: relative; margin-right: 2px; }
.fg { position: absolute; left: 2px; top: 1px; width: 13px; height: 13px; background: #808080; }
.bg { position: absolute; left: 9px; top: 6px; width: 12px; height: 12px; background: #fff; }
.colors { display: grid; grid-template-columns: repeat(14, 10px); grid-auto-rows: 10px; gap: 1px .7px; }
.colors i { display: block; box-shadow: inset 0 0 0 1px rgba(90,110,140,.25); }
.c-fff { background: #fff; } .c-c0 { background: #c0c0c0; } .c-red { background: #f00; } .c-yel { background: #ff0; } .c-lim { background: #0f0; } .c-cya { background: #0ff; } .c-blu { background: #00f; } .c-mag { background: #f0f; } .c-min { background: #00e080; } .c-lbl { background: #a6caf0; } .c-a0 { background: #a0a0a4; } .c-pnk { background: #ff0080; } .c-lgr { background: #c0dcc0; }
.c-blk { background: #000; } .c-80 { background: #808080; } .c-mar { background: #800000; } .c-oli { background: #808000; } .c-grn { background: #008000; } .c-tea { background: #008080; } .c-nav { background: #000080; } .c-pur { background: #800080; } .c-ol2 { background: #808040; } .c-dte { background: #004040; } .c-azu { background: #0080ff; } .c-dbl { background: #004080; } .c-ind { background: #400080; } .c-bro { background: #804000; }

/* status */
.status { flex: none; height: 13px; display: flex; gap: 1px; margin-left: 1px; background: #f0f0ee; font: 7.500px/11px "Liberation Sans", sans-serif; color: #333; }
.pane { box-sizing: border-box; border: 1px solid #c4c6c4; padding-left: 1px; white-space: nowrap; }
.p1 { width: 467px; }
.p2 { width: 81px; }
.p3 { width: 17px; }
.p4 { width: 19px; padding-left: 0; font-size: 6.500px; }
.sgrip { flex: 1; }
```
